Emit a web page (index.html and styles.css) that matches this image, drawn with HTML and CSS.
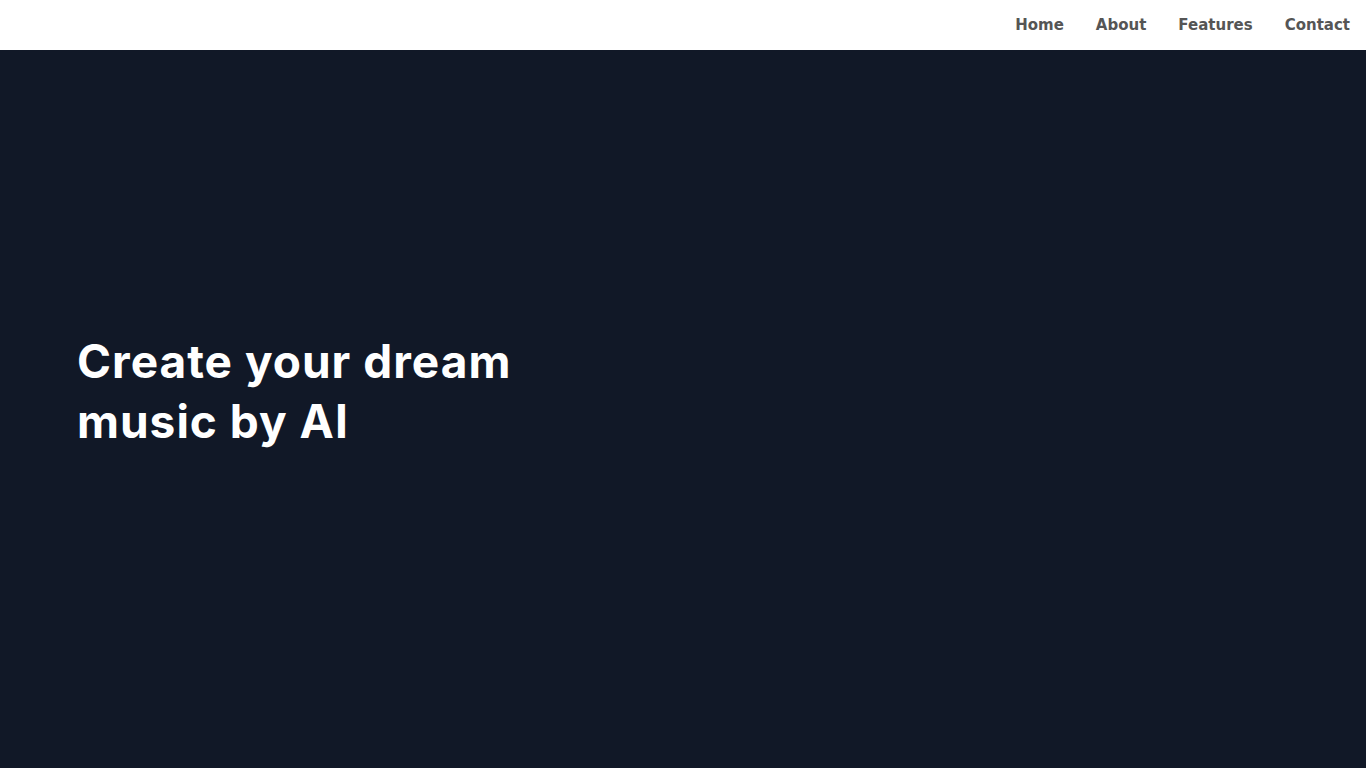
FILE: index.html
```html
<!DOCTYPE html>
<html lang="en">
<head>
<meta charset="utf-8">
<title>Create your dream music by AI</title>
<link rel="stylesheet" href="styles.css">
</head>
<body>
<header class="topbar">
  <nav class="nav">
    <a class="nav-link" href="#">Home</a>
    <a class="nav-link" href="#">About</a>
    <a class="nav-link" href="#">Features</a>
    <a class="nav-link" href="#">Contact</a>
  </nav>
</header>
<main class="hero">
  <h1 class="hero-title">Create your dream<br>music by AI</h1>
</main>
</body>
</html>
```
FILE: styles.css
```css
html, body {
  margin: 0;
  padding: 0;
  height: 100%;
}
body {
  font-family: "DejaVu Sans", sans-serif;
  background: #111827;
  display: flex;
  flex-direction: column;
  min-height: 100vh;
}
.topbar {
  height: 50px;
  background: #ffffff;
  display: flex;
  align-items: center;
  justify-content: flex-end;
  padding: 0 16px;
  flex-shrink: 0;
}
.nav {
  display: flex;
  gap: 32px;
}
.nav-link {
  font-weight: 700;
  font-size: 15px;
  color: #555555;
  text-decoration: none;
}
.hero {
  flex: 1;
  display: flex;
  align-items: center;
  padding: 0 77px 36px;
}
.hero-title {
  margin: 0;
  font-family: "Inter", sans-serif;
  font-weight: 700;
  font-size: 46px;
  line-height: 60px;
  color: #ffffff;
  letter-spacing: 1px;
}
```
